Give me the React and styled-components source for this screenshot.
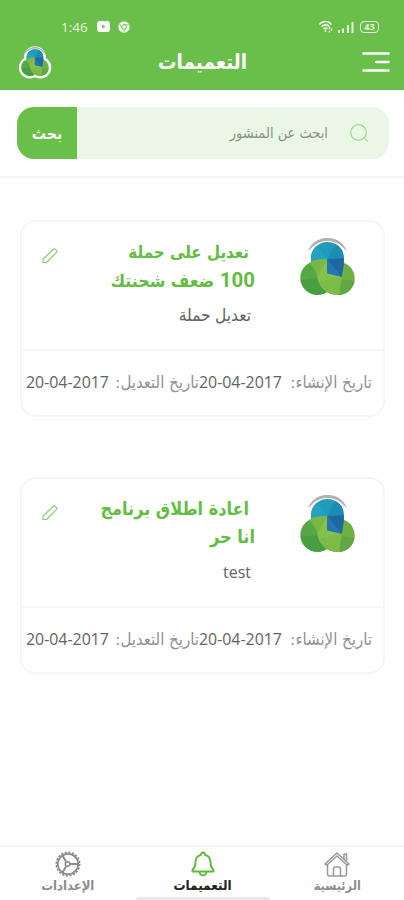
import React from "react";
import styled, { createGlobalStyle } from "styled-components";

const colors = {
  green: "#6abf4b",
  titleGreen: "#62bd42",
  paleGreen: "#eaf6e6",
  line: "#f5f5f5",
  grey: "#919191",
  dark: "#626262"
};

const GlobalStyle = createGlobalStyle`
  * {
    box-sizing: border-box;
  }
  body {
    margin: 0;
    background: #fff;
    font-family: "DejaVu Sans Condensed", "DejaVu Sans", sans-serif;
  }
`;

const Screen = styled.div`
  width: 404px;
  height: 900px;
  display: flex;
  flex-direction: column;
  direction: rtl;
  overflow: hidden;
  background: #fefefe;
`;

const Header = styled.header`
  height: 90px;
  flex: none;
  background: ${colors.green};
  color: #fff;
`;

const StatusBar = styled.div`
  height: 40px;
  padding: 13px 25px 0 61px;
  display: flex;
  direction: ltr;
  align-items: center;
  justify-content: space-between;
`;

const StatusGroup = styled.div`
  display: flex;
  align-items: center;
  gap: ${props => props.$gap}px;
`;

const Clock = styled.span`
  font: 13.5px/16px "Open Sans", sans-serif;
  width: 28px;
  white-space: nowrap;
  color: #e6f5df;
`;

const TopBar = styled.div`
  height: 44px;
  padding: 0 14px 0 18px;
  display: flex;
  align-items: center;
  justify-content: space-between;
`;

const PageTitle = styled.h1`
  margin: 0;
  padding-right: 9px;
  font-size: 20.5px;
  line-height: 30px;
  font-weight: bold;
`;

const SearchSection = styled.section`
  height: 88px;
  flex: none;
  padding: 17px 15px 0 17px;
  border-bottom: 2px solid #f7f7f7;
`;

const SearchBox = styled.div`
  height: 52px;
  display: flex;
  align-items: center;
  border-radius: 17px;
  overflow: hidden;
  background: ${colors.paleGreen};
  padding-right: 20px;
`;

const Placeholder = styled.span`
  flex: 1;
  padding-right: 22px;
  font-size: 14.5px;
  color: #8a9186;
`;

const SearchButton = styled.button`
  width: 60px;
  height: 52px;
  border: none;
  padding: 0;
  background: ${colors.green};
  color: #fff;
  font: bold 15.8px "DejaVu Sans Condensed", "DejaVu Sans", sans-serif;
`;

const List = styled.main`
  flex: 1;
  padding: 42px 19px 0 20px;
  display: flex;
  flex-direction: column;
  gap: 60px;
`;

const Card = styled.article`
  height: 197px;
  flex: none;
  border: 2px solid ${colors.line};
  border-radius: 16px;
  background: #fff;
`;

const CardTop = styled.div`
  height: 129px;
  display: flex;
  padding: 16px 28px 0 20px;
  border-bottom: 2px solid ${colors.line};
`;

const CardText = styled.div`
  flex: 1;
  padding-right: 45px;
`;

const TitleLine = styled.div`
  height: 28px;
  padding-right: ${props => props.$indent || 0}px;
  font: bold ${props => props.$size}px/28px "DejaVu Sans Condensed", "DejaVu Sans", sans-serif;
  white-space: nowrap;
  color: ${colors.titleGreen};
`;

const TitleNumber = styled.span`
  font: bold 20.5px/28px Roboto, sans-serif;
`;

const Subtitle = styled.div`
  margin-top: 9px;
  padding-right: 4px;
  font: ${props => props.$size}px/24px "Open Sans", "DejaVu Sans Condensed", "DejaVu Sans", sans-serif;
  color: ${colors.dark};
`;

const EditButton = styled.button`
  width: 16px;
  height: 16px;
  margin-top: 10px;
  padding: 0;
  border: none;
  background: none;
`;

const Dates = styled.div`
  height: 62px;
  display: flex;
  align-items: center;
  padding-right: 11px;
  white-space: nowrap;
`;

const DateLabel = styled.span`
  width: ${props => props.$width}px;
  font-size: 16.7px;
  color: ${colors.grey};
`;

const DateValue = styled.span`
  width: 83px;
  font: 15.9px/22px "Open Sans", sans-serif;
  direction: ltr;
  color: ${colors.dark};
`;

const BottomNav = styled.nav`
  height: 55px;
  flex: none;
  display: flex;
  border-top: 2px solid ${colors.line};
`;

const NavItem = styled.div`
  flex: 1;
  display: flex;
  flex-direction: column;
  align-items: center;
  padding-top: 4px;
  padding-left: 1px;
  color: ${props => (props.$active ? "#222" : "#8c8c8c")};
`;

const NavLabel = styled.span`
  font-size: ${props => props.$size}px;
  line-height: 18px;
  height: 20px;
  font-weight: bold;
`;

const ActiveBar = styled.div`
  width: 134px;
  height: 3px;
  border-radius: 2px 2px 0 0;
  background: #e8e8e8;
`;

const YoutubeIcon = () => (
  <svg width="13" height="11" viewBox="0 0 13 11">
    <rect width="13" height="11" rx="3" fill="#fff" />
    <path d="M5 3.500v4L8.500 5.500z" fill={colors.green} />
  </svg>
);

const ChromeIcon = () => (
  <svg width="12" height="12" viewBox="0 0 12 12" fill="none">
    <circle cx="6" cy="6" r="5.700" fill="#f4fbf1" />
    <circle cx="6" cy="6" r="2.300" stroke={colors.green} />
    <path d="M6 3.700h5M4 7.200 1.600 3M8 7.200 5.700 11" stroke={colors.green} strokeWidth=".7" />
  </svg>
);

const WifiIcon = () => (
  <svg width="15" height="13" viewBox="0 0 14 13" fill="none" stroke="#e6f5df" strokeWidth="1.600">
    <path d="M.8 4.400C4 .6 10 .6 13 4.400M3 6.700c2-2.400 6-2.400 8 0M5 8.900c1-1.200 3-1.200 4 0" />
    <path d="M7 9.500v2.500M11 7v2M11 10.500v2M13 8.500v2" />
  </svg>
);

const SignalIcon = () => (
  <svg width="16" height="12" viewBox="0 0 16 12" stroke="#e6f5df" strokeWidth="2">
    <path d="M1 9v3M5 7.500V12M10 4v8M14.500 1v11" />
  </svg>
);

const BatteryFrame = styled.span`
  width: 19px;
  height: 12px;
  margin-left: 1px;
  border: 1.5px solid #e6f5df;
  border-radius: 4px;
  color: #e6f5df;
  text-align: center;
  font: bold 9px/10px "Open Sans", sans-serif;
`;

const MenuIcon = () => (
  <svg width="28" height="22" viewBox="0 0 28 22" stroke="#fff" strokeWidth="2.600" strokeLinecap="round">
    <path d="M1.500 2.500h25M14 11h12.500M1.500 19.500h25" />
  </svg>
);

const LogoShapes = () => (
  <>
    <path d="M8 13C15-4.500 40-4.500 47 13l-3-2.500C36 .5 19 .5 11 10.500z" fill="#b0afb1" />
    <path d="M11 30V20.300a16.300 16.300 0 0 1 32.800 0V30z" fill="#219bbb" />
    <path d="M11 20.300A16.300 16.300 0 0 1 17 7.500L27.300 21.300 11 26z" fill="#27a2bd" />
    <path d="m27.300 21.300 8-15.500a16.300 16.300 0 0 1 8.500 14.500z" fill="#1c8db2" />
    <circle cx="17.300" cy="40" r="17" fill="#56a846" />
    <path d="m17 40-16.300 2a17 17 0 0 0 26 12z" fill="#489e41" />
    <circle cx="38" cy="40.400" r="16.700" fill="#6db044" />
    <path d="M38 40.400 54.500 43A16.700 16.700 0 0 1 40 57z" fill="#63a744" />
    <path d="M9.500 25C15 21.500 20 21 27.300 21.300v14l14.400 3.400L39 57C26 58 18 47 17.500 39 16.500 33 13 29 9.500 25z" fill="#85c14b" />
    <path d="M9.500 25C15 21.500 20 21 27.300 21.300L17.500 38C16.500 33 13 29 9.500 25z" fill="#78b848" />
    <path d="m19 44 22.700-5.300L39 57c-9 .5-17-5-20-13z" fill="#7bbb47" />
    <path d="M27.300 21.300 43.900 20v7l-2.200 11.700-14.400-3.400z" fill="#1e68a2" />
    <path d="m27.300 21.300 14.400 17.400-14.400-3.400z" fill="#2577b3" />
  </>
);

const CardLogo = () => (
  <svg width="55" height="59" viewBox="0 0 55 59">
    <LogoShapes />
  </svg>
);

const HeaderLogo = () => (
  <svg width="34" height="34" viewBox="-5 -4 65 67">
    <g fill="#fff" stroke="#fff" strokeWidth="9">
      <circle cx="27.500" cy="20" r="17" />
      <circle cx="17.300" cy="40.500" r="17" />
      <circle cx="38" cy="40.500" r="17" />
    </g>
    <LogoShapes />
  </svg>
);

const SearchIcon = () => (
  <svg width="19" height="19" viewBox="0 0 19 19" fill="none" stroke="#a9d798" strokeWidth="1.200">
    <circle cx="8.500" cy="8.500" r="7.800" />
    <path d="m14 14 4 3.500" />
  </svg>
);

const PencilIcon = () => (
  <svg width="16" height="16" viewBox="0 0 16 16" fill="none" stroke="#8bcb76" strokeWidth="1.200">
    <path d="M1 14.500v-3.500L11.500 1.200q1-.7 2 .3l.8.8q1 1 .2 2L4.500 14.500z" strokeLinejoin="round" />
  </svg>
);

const HomeIcon = () => (
  <svg width="26" height="26" viewBox="0 0 26 26" fill="none" stroke="#999" strokeWidth="1.500">
    <path d="M1 13 13 2l12 11-2 1L13 5 3 14zM20 8V3h2.500v8" strokeLinejoin="round" />
    <path d="M3.500 14v9q0 2 2 2h15q2 0 2-2v-9M9.500 25v-7q0-2 2-2h3q2 0 2 2v7" />
  </svg>
);

const BellIcon = () => (
  <svg width="26" height="26" viewBox="0 0 26 26" fill="none" stroke="#5fba40" strokeWidth="1.900" strokeLinejoin="round">
    <path d="M11 4q0-2.500 2-2.500T15 4c4 .8 5.500 4 5.500 7.500 0 4 1 5.500 3 7.500v1.500h-21V19c2-2 3-3.500 3-7.500C5.500 8 7 4.800 11 4zM9.500 21c.5 4.500 6.500 4.500 7 0" />
  </svg>
);

const GearIcon = () => (
  <svg width="26" height="26" viewBox="0 0 26 26" fill="none" stroke="#8a8a8a">
    <circle cx="13" cy="13" r="11.700" strokeWidth="1.600" strokeDasharray="2.200 1.475" />
    <circle cx="13" cy="13" r="10.200" strokeWidth="1.700" />
    <circle cx="12.500" cy="13" r="2.300" strokeWidth="1.500" />
    <path d="M15 13h8M11.300 10.900 7.500 4.500M11.300 15.100l-3.800 6.400" strokeWidth="1.900" />
  </svg>
);

const announcements = [
  {
    lines: [
      { text: "تعديل على حملة", size: 16.8, indent: 6 },
      { number: "100", text: " ضعف شحنتك", size: 17.7 }
    ],
    subtitle: "تعديل حملة",
    subtitleSize: 17.2,
    created: "20-04-2017",
    modified: "20-04-2017"
  },
  {
    lines: [
      { text: "اعادة اطلاق برنامج", size: 17.9, indent: 6 },
      { text: "انا حر", size: 18 }
    ],
    subtitle: "test",
    subtitleSize: 16,
    created: "20-04-2017",
    modified: "20-04-2017"
  }
];

const Announcement = ({ item }) => (
  <Card>
    <CardTop>
      <CardLogo />
      <CardText>
        {item.lines.map(line => (
          <TitleLine key={line.text} $size={line.size} $indent={line.indent}>
            {line.number && <TitleNumber>{line.number}</TitleNumber>}
            {line.text}
          </TitleLine>
        ))}
        <Subtitle $size={item.subtitleSize}>{item.subtitle}</Subtitle>
      </CardText>
      <EditButton>
        <PencilIcon />
      </EditButton>
    </CardTop>
    <Dates>
      <DateLabel $width={90}>تاريخ الإنشاء:</DateLabel>
      <DateValue>{item.created}</DateValue>
      <DateLabel $width={90}>تاريخ التعديل:</DateLabel>
      <DateValue>{item.modified}</DateValue>
    </Dates>
  </Card>
);

const App = () => (
  <>
    <GlobalStyle />
    <Screen>
      <Header>
        <StatusBar>
          <StatusGroup $gap={8}>
            <Clock>1:46</Clock>
            <YoutubeIcon />
            <ChromeIcon />
          </StatusGroup>
          <StatusGroup $gap={5}>
            <WifiIcon />
            <SignalIcon />
            <BatteryFrame>43</BatteryFrame>
          </StatusGroup>
        </StatusBar>
        <TopBar>
          <MenuIcon />
          <PageTitle>التعميمات</PageTitle>
          <HeaderLogo />
        </TopBar>
      </Header>
      <SearchSection>
        <SearchBox>
          <SearchIcon />
          <Placeholder>ابحث عن المنشور</Placeholder>
          <SearchButton>بحث</SearchButton>
        </SearchBox>
      </SearchSection>
      <List>
        {announcements.map(item => (
          <Announcement key={item.subtitle} item={item} />
        ))}
      </List>
      <BottomNav>
        <NavItem>
          <HomeIcon />
          <NavLabel $size={12.6}>الرئيسية</NavLabel>
        </NavItem>
        <NavItem $active>
          <BellIcon />
          <NavLabel $size={13.4}>التعميمات</NavLabel>
          <ActiveBar />
        </NavItem>
        <NavItem>
          <GearIcon />
          <NavLabel $size={13}>الإعدادات</NavLabel>
        </NavItem>
      </BottomNav>
    </Screen>
  </>
);

export default App;
